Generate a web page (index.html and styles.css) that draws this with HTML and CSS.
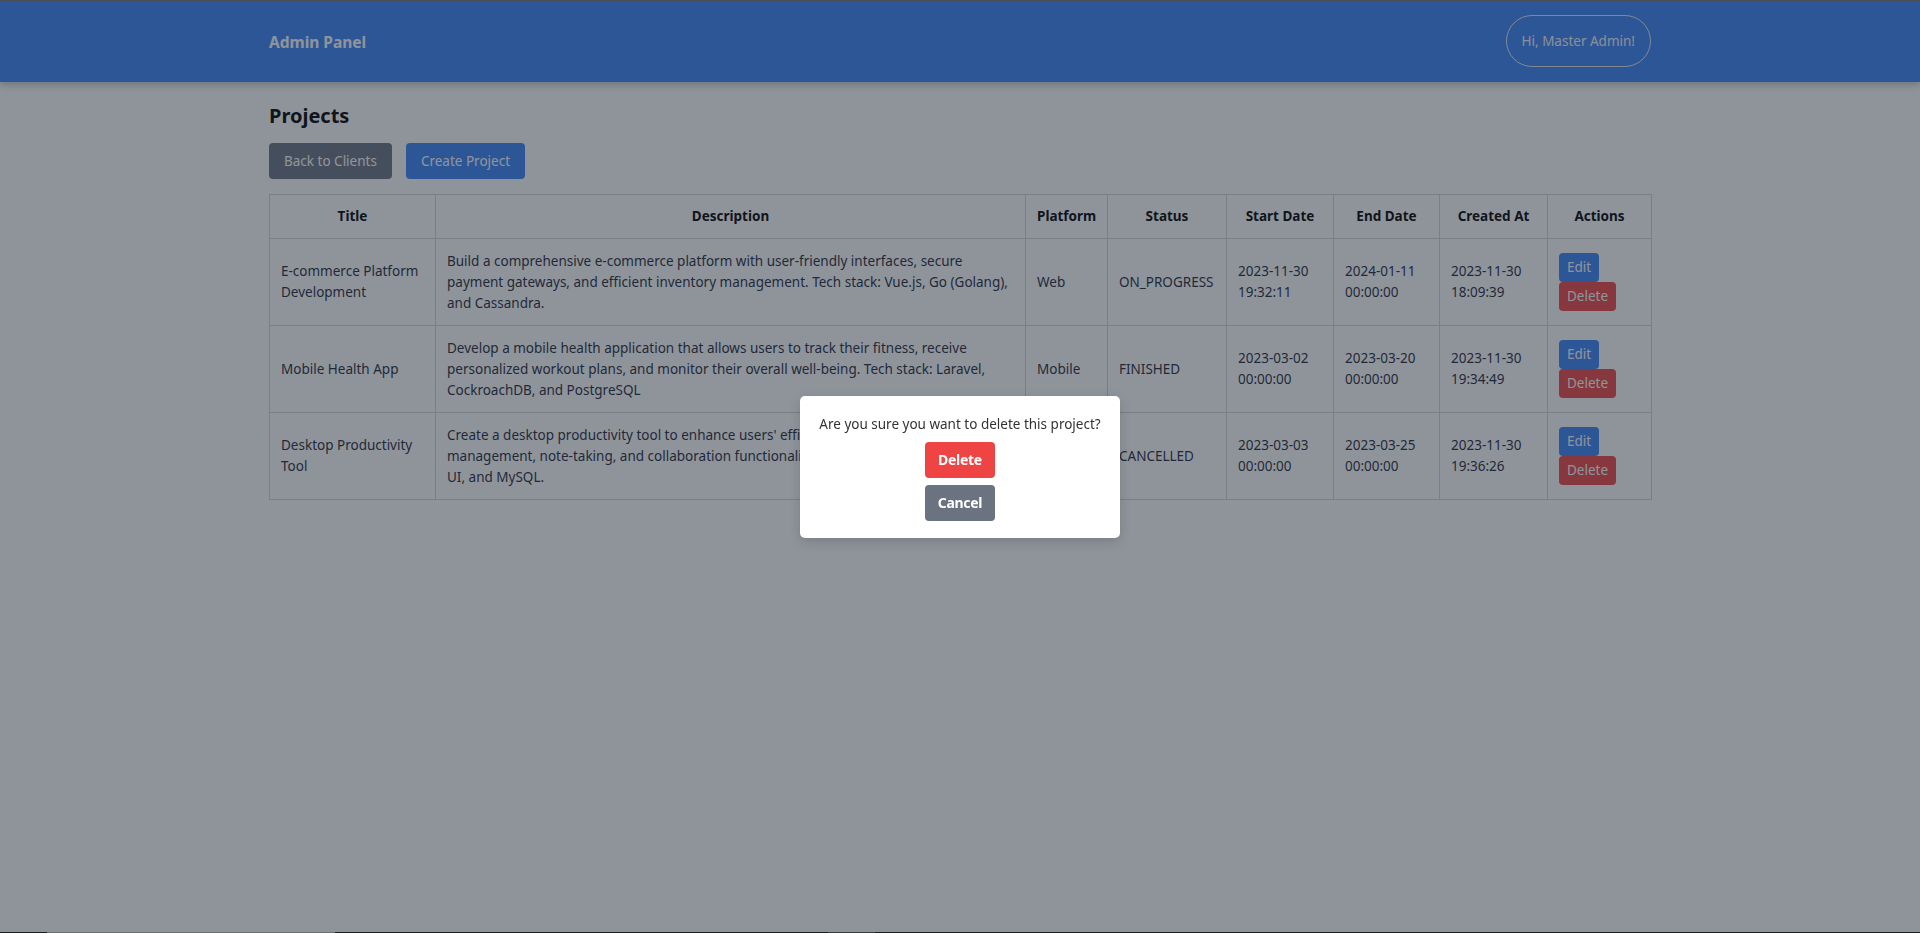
FILE: index.html
```html
<!DOCTYPE html>
<html lang="en">
<head>
<meta charset="utf-8">
<title>Admin Panel - Projects</title>
<link rel="stylesheet" href="styles.css">
</head>
<body>
<div class="topline"></div>
<header class="navbar">
  <div class="container nav-inner">
    <span class="brand">Admin Panel</span>
    <button class="user-btn">Hi, Master Admin!</button>
  </div>
</header>
<main class="container page">
  <h1 class="page-title">Projects</h1>
  <div class="toolbar">
    <button class="btn btn-gray">Back to Clients</button>
    <button class="btn btn-blue">Create Project</button>
  </div>
  <table class="projects">
    <colgroup>
      <col class="c-title"><col class="c-desc"><col class="c-platform"><col class="c-status">
      <col class="c-start"><col class="c-end"><col class="c-created"><col class="c-actions">
    </colgroup>
    <thead>
      <tr><th>Title</th><th>Description</th><th>Platform</th><th>Status</th><th>Start Date</th><th>End Date</th><th>Created At</th><th>Actions</th></tr>
    </thead>
    <tbody>
      <tr>
        <td>E-commerce Platform Development</td>
        <td>Build a comprehensive e-commerce platform with user-friendly interfaces, secure payment gateways, and efficient inventory management. Tech stack: Vue.js, Go (Golang), and Cassandra.</td>
        <td>Web</td>
        <td>ON_PROGRESS</td>
        <td>2023-11-30 19:32:11</td>
        <td>2024-01-11 00:00:00</td>
        <td>2023-11-30 18:09:39</td>
        <td><div class="actions"><button class="sbtn sbtn-blue">Edit</button><button class="sbtn sbtn-red">Delete</button></div></td>
      </tr>
      <tr>
        <td>Mobile Health App</td>
        <td>Develop a mobile health application that allows users to track their fitness, receive personalized workout plans, and monitor their overall well-being. Tech stack: Laravel, CockroachDB, and PostgreSQL</td>
        <td>Mobile</td>
        <td>FINISHED</td>
        <td>2023-03-02 00:00:00</td>
        <td>2023-03-20 00:00:00</td>
        <td>2023-11-30 19:34:49</td>
        <td><div class="actions"><button class="sbtn sbtn-blue">Edit</button><button class="sbtn sbtn-red">Delete</button></div></td>
      </tr>
      <tr>
        <td>Desktop Productivity Tool</td>
        <td>Create a desktop productivity tool to enhance users' efficiency with features like task management, note-taking, and collaboration functionalities. Tech stack: React, Material UI, and MySQL.</td>
        <td>Desktop</td>
        <td>CANCELLED</td>
        <td>2023-03-03 00:00:00</td>
        <td>2023-03-25 00:00:00</td>
        <td>2023-11-30 19:36:26</td>
        <td><div class="actions"><button class="sbtn sbtn-blue">Edit</button><button class="sbtn sbtn-red">Delete</button></div></td>
      </tr>
    </tbody>
  </table>
</main>

<div class="overlay">
  <div class="modal">
    <p class="modal-text">Are you sure you want to delete this project?</p>
    <button class="mbtn mbtn-red">Delete</button>
    <button class="mbtn mbtn-gray">Cancel</button>
  </div>
</div>
<div class="taskbar-edge"></div>
</body>
</html>
```
FILE: styles.css
```css
* { box-sizing: border-box; }

html, body {
  margin: 0;
  padding: 0;
  background: #ffffff;
  font-family: "Noto Sans", "Open Sans", sans-serif;
  font-size: 13.5px;
  line-height: 21px;
  color: #1f2937;
  height: 100%;
}

button {
  font-family: inherit;
  cursor: pointer;
}

.container {
  width: 1382px;
  margin: 0 auto;
}

.topline {
  position: fixed;
  top: 0;
  left: 0;
  right: 0;
  height: 1px;
  background: #4b4f55;
  z-index: 30;
}

.navbar {
  background: #3b82f6;
  height: 82px;
  box-shadow: 0 3px 8px rgba(0, 0, 0, 0.25);
}

.nav-inner {
  height: 100%;
  display: flex;
  align-items: center;
  justify-content: space-between;
}

.brand {
  color: #ffffff;
  font-weight: 700;
  font-size: 15.5px;
  padding-top: 3px;
}

.user-btn {
  background: transparent;
  color: #f3f4f6;
  border: 1px solid #e5e7eb;
  border-radius: 9999px;
  font-size: 13.5px;
  line-height: 21px;
  padding: 14.5px 15px;
  margin-top: 0;
}

.page {
  padding-top: 20px;
}

.page-title {
  margin: 0 0 13px;
  font-size: 20px;
  line-height: 28px;
  font-weight: 700;
  color: #000000;
}

.toolbar {
  display: flex;
  gap: 14px;
  margin-bottom: 15px;
}

.btn {
  border: none;
  border-radius: 4px;
  color: #ffffff;
  font-size: 13.5px;
  line-height: 21px;
  padding: 7.5px 15px;
}

.btn-gray { background: #6b7280; }
.btn-blue { background: #3b82f6; }

.projects {
  width: 1382px;
  table-layout: fixed;
  border-collapse: collapse;
}

.c-title { width: 166px; }
.c-desc { width: 590px; }
.c-platform { width: 82px; }
.c-status { width: 119px; }
.c-start { width: 107px; }
.c-end { width: 106px; }
.c-created { width: 108px; }
.c-actions { width: 104px; }

.projects th,
.projects td {
  border: 1px solid #d1d5db;
  padding: 11.5px 11px;
  vertical-align: middle;
  text-align: left;
}

.projects th {
  padding: 11px 11px;
  text-align: center;
  font-weight: 700;
  color: #000000;
}

.actions {
  display: flex;
  flex-direction: column;
  align-items: flex-start;
}

.sbtn {
  border: none;
  border-radius: 4px;
  color: #ffffff;
  font-size: 13.5px;
  line-height: 21px;
  padding: 4px 8px;
}

.sbtn-blue { background: #3b82f6; }
.sbtn-red { background: #ef4444; }

.overlay {
  position: fixed;
  inset: 0;
  background: rgba(31, 41, 55, 0.5);
  display: flex;
  align-items: center;
  justify-content: center;
  z-index: 10;
}

.modal {
  width: 320px;
  background: #ffffff;
  border-radius: 5px;
  padding: 16px 16px 17px;
  display: flex;
  flex-direction: column;
  align-items: center;
  box-shadow: 0 4px 12px rgba(0, 0, 0, 0.15);
}

.modal-text {
  margin: 0 0 6px;
  line-height: 24px;
  color: #333333;
  white-space: nowrap;
}

.mbtn {
  width: 70px;
  height: 36px;
  border: none;
  border-radius: 4px;
  color: #ffffff;
  font-size: 14px;
  font-weight: 700;
  letter-spacing: -0.3px;
  padding: 0;
}

.mbtn-red { background: #ef4444; margin-bottom: 7px; }
.mbtn-gray { background: #6b7280; }

.taskbar-edge {
  position: fixed;
  left: 0;
  right: 0;
  bottom: 0;
  height: 1px;
  z-index: 30;
  background: linear-gradient(to right,
    #1c1c1c 0, #1c1c1c 47px,
    #6e6e6e 47px, #6e6e6e 335px,
    #1c1c1c 335px, #1c1c1c 828px,
    #3a3a3a 828px, #3a3a3a 875px,
    #1c1c1c 875px);
}
```
